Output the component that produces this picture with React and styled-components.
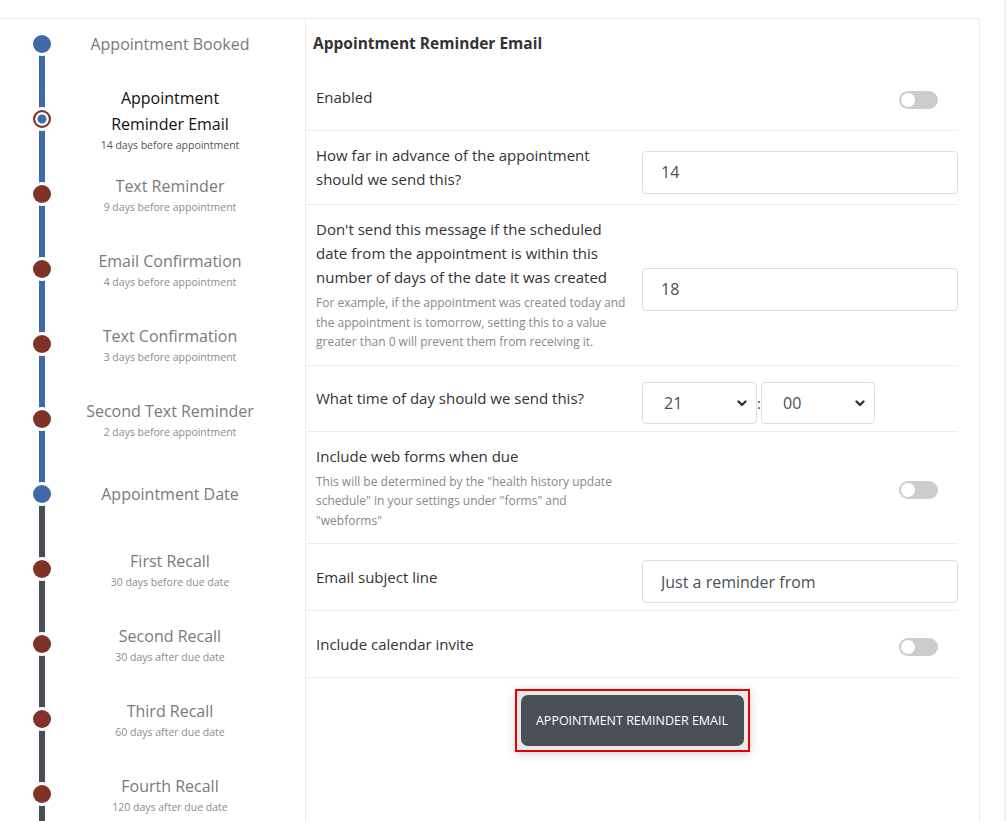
import React from "react";
import styled, { createGlobalStyle } from "styled-components";

const BLUE = "#3e6aa8";
const BROWN = "#7f3328";
const DARK = "#4a4d55";

const GlobalStyle = createGlobalStyle`
  html, body {
    margin: 0;
    padding: 0;
    background: #fff;
    overflow: hidden;
  }
  body {
    font-family: "Open Sans", "Noto Sans", sans-serif;
    color: #333;
  }
  * { box-sizing: border-box; }
`;

const Page = styled.div`
  width: 1006px;
  height: 100vh;
  padding-top: 18px;
  border-right: 2px solid #f1f1f3;
`;

const Layout = styled.div`
  width: 980px;
  height: 100%;
  display: flex;
  border-top: 1px solid #ececec;
  border-right: 1px solid #ececec;
`;

/* ---------- timeline ---------- */

const Timeline = styled.ul`
  list-style: none;
  margin: 0;
  padding: 0;
  width: 305px;
  flex-shrink: 0;
`;

const Step = styled.li`
  position: relative;
  height: 75px;
  padding-bottom: 25px;
  display: flex;
  align-items: center;

  &::before,
  &::after {
    content: "";
    position: absolute;
    left: 39px;
    width: 6px;
  }
  &::before {
    top: 0;
    height: 25px;
    background: ${(p) => p.$above || "transparent"};
  }
  &::after {
    top: 25px;
    bottom: 0;
    background: ${(p) => p.$below || "transparent"};
  }
`;

const MarkerSlot = styled.div`
  width: 84px;
  flex-shrink: 0;
  display: flex;
  justify-content: center;
`;

const Marker = styled.span`
  position: relative;
  z-index: 1;
  width: 18px;
  height: 18px;
  border-radius: 50%;
  background: ${(p) => (p.$kind === "brown" ? BROWN : BLUE)};
  border: ${(p) => (p.$kind === "current" ? `2.5px solid ${BROWN}` : "none")};
  box-shadow: ${(p) =>
    p.$kind === "current"
      ? "inset 0 0 0 2.5px #fff, 0 0 0 3px #fff"
      : "0 0 0 3px #fff"};
`;

const StepText = styled.div`
  width: 172px;
  flex-shrink: 0;
  display: flex;
  flex-direction: column;
  align-items: center;
  text-align: center;
`;

const StepTitle = styled.div`
  width: ${(p) => (p.$active ? "172px" : "200px")};
  font-size: 16px;
  line-height: 26px;
  color: ${(p) => (p.$active ? "#111" : "#7a7a7a")};
`;

const StepSub = styled.div`
  font-size: 10.5px;
  line-height: 16px;
  white-space: nowrap;
  color: ${(p) => (p.$active ? "#555" : "#8c8c8c")};
`;

/* ---------- settings panel ---------- */

const Panel = styled.section`
  flex: 1;
  border-left: 1px solid #ececec;
  padding-right: 21px;
`;

const PanelTitle = styled.h2`
  margin: 0 0 9px;
  padding: 12px 0 0 7px;
  font-size: 15.5px;
  font-weight: 700;
  line-height: 24px;
  color: #333;
`;

const Row = styled.div`
  display: grid;
  grid-template-columns: 1fr 316px;
  column-gap: 10px;
  align-items: center;
  padding: 12px 0 7px 10px;
  border-bottom: 1px solid #ececec;
`;

const LabelCell = styled.div`
  margin-bottom: 6px;
`;

const Label = styled.div`
  font-size: 15px;
  line-height: 24px;
  color: #333;
`;

const Help = styled.div`
  max-width: 312px;
  margin-top: 4px;
  font-size: 12px;
  line-height: 19.5px;
  color: #888;
`;

const Control = styled.div`
  padding-top: 4px;
  display: flex;
  align-items: center;
`;

const SwitchCell = styled.div`
  min-height: 47px;
  display: flex;
  align-items: center;
  justify-content: flex-end;
  padding-right: 20px;
`;

const Switch = styled.span`
  position: relative;
  width: 39px;
  height: 18px;
  border-radius: 9px;
  background: #cccccc;

  &::after {
    content: "";
    position: absolute;
    left: 2px;
    top: 2px;
    width: 14px;
    height: 14px;
    border-radius: 50%;
    background: #fff;
  }
`;

const TextInput = styled.input`
  width: 100%;
  height: 43px;
  padding: 0 18px;
  border: 1px solid #dcdfe3;
  border-radius: 4px;
  font-family: inherit;
  font-size: 16px;
  color: #495057;
  outline: none;
`;

const chevron =
  "url(\"data:image/svg+xml,%3Csvg xmlns='http://www.w3.org/2000/svg' viewBox='0 0 12 12'%3E%3Cpath d='M2.5 4.5l3.5 3.5 3.5-3.5' fill='none' stroke='%23333' stroke-width='2.4' stroke-linecap='round' stroke-linejoin='round'/%3E%3C/svg%3E\")";

const Select = styled.select`
  width: ${(p) => p.$width}px;
  height: 42px;
  padding: 0 0 0 21px;
  border: 1px solid #dcdfe3;
  border-radius: 4px;
  appearance: none;
  background: #fff ${chevron} no-repeat right 8px center / 12px 12px;
  font-family: inherit;
  font-size: 16px;
  color: #495057;
  outline: none;
`;

const Colon = styled.span`
  width: 4px;
  text-align: center;
  font-size: 15px;
  color: #444;
`;

const Actions = styled.div`
  display: flex;
  justify-content: center;
  padding-top: 11px;
`;

const ButtonFrame = styled.div`
  padding: 4px;
  border: 2px solid #e60000;
  background: #e8e8e8;
  box-shadow: 0 2px 10px rgba(0, 0, 0, 0.18);
`;

const PrimaryButton = styled.button`
  width: 223px;
  height: 51px;
  border: none;
  border-radius: 7px;
  background: #4a4e56;
  color: #fff;
  font-family: inherit;
  font-size: 12.5px;
  text-transform: uppercase;
  cursor: pointer;
`;

const steps = [
  { title: "Appointment Booked", marker: "blue", below: BLUE },
  {
    title: "Appointment Reminder Email",
    sub: "14 days before appointment",
    marker: "current",
    active: true,
    above: BLUE,
    below: BLUE,
  },
  { title: "Text Reminder", sub: "9 days before appointment", marker: "brown", above: BLUE, below: BLUE },
  { title: "Email Confirmation", sub: "4 days before appointment", marker: "brown", above: BLUE, below: BLUE },
  { title: "Text Confirmation", sub: "3 days before appointment", marker: "brown", above: BLUE, below: BLUE },
  { title: "Second Text Reminder", sub: "2 days before appointment", marker: "brown", above: BLUE, below: BLUE },
  { title: "Appointment Date", marker: "blue", above: BLUE, below: DARK },
  { title: "First Recall", sub: "30 days before due date", marker: "brown", above: DARK, below: DARK },
  { title: "Second Recall", sub: "30 days after due date", marker: "brown", above: DARK, below: DARK },
  { title: "Third Recall", sub: "60 days after due date", marker: "brown", above: DARK, below: DARK },
  { title: "Fourth Recall", sub: "120 days after due date", marker: "brown", above: DARK, below: DARK },
];

const hours = Array.from({ length: 24 }, (_, i) => String(i).padStart(2, "0"));
const minutes = ["00", "15", "30", "45"];

const App = () => {
  return (
    <Page>
      <GlobalStyle />
      <Layout>
        <Timeline>
          {steps.map((s) => (
            <Step key={s.title} $above={s.above} $below={s.below}>
              <MarkerSlot>
                <Marker $kind={s.marker} />
              </MarkerSlot>
              <StepText>
                <StepTitle $active={s.active}>{s.title}</StepTitle>
                {s.sub && <StepSub $active={s.active}>{s.sub}</StepSub>}
              </StepText>
            </Step>
          ))}
        </Timeline>

        <Panel>
          <PanelTitle>Appointment Reminder Email</PanelTitle>

          <Row>
            <LabelCell>
              <Label>Enabled</Label>
            </LabelCell>
            <SwitchCell>
              <Switch role="switch" aria-checked="false" />
            </SwitchCell>
          </Row>

          <Row>
            <LabelCell>
              <Label>How far in advance of the appointment should we send this?</Label>
            </LabelCell>
            <Control>
              <TextInput defaultValue="14" />
            </Control>
          </Row>

          <Row>
            <LabelCell>
              <Label>
                Don't send this message if the scheduled date from the appointment is within this
                number of days of the date it was created
              </Label>
              <Help>
                For example, if the appointment was created today and the appointment is tomorrow,
                setting this to a value greater than 0 will prevent them from receiving it.
              </Help>
            </LabelCell>
            <Control>
              <TextInput defaultValue="18" />
            </Control>
          </Row>

          <Row>
            <LabelCell>
              <Label>What time of day should we send this?</Label>
            </LabelCell>
            <Control>
              <Select $width={115} defaultValue="21">
                {hours.map((h) => (
                  <option key={h} value={h}>
                    {h}
                  </option>
                ))}
              </Select>
              <Colon>:</Colon>
              <Select $width={114} defaultValue="00">
                {minutes.map((m) => (
                  <option key={m} value={m}>
                    {m}
                  </option>
                ))}
              </Select>
            </Control>
          </Row>

          <Row>
            <LabelCell>
              <Label>Include web forms when due</Label>
              <Help>
                This will be determined by the "health history update schedule" in your settings
                under "forms" and "webforms"
              </Help>
            </LabelCell>
            <SwitchCell>
              <Switch role="switch" aria-checked="false" />
            </SwitchCell>
          </Row>

          <Row>
            <LabelCell>
              <Label>Email subject line</Label>
            </LabelCell>
            <Control>
              <TextInput defaultValue="Just a reminder from" />
            </Control>
          </Row>

          <Row>
            <LabelCell>
              <Label>Include calendar invite</Label>
            </LabelCell>
            <SwitchCell>
              <Switch role="switch" aria-checked="false" />
            </SwitchCell>
          </Row>

          <Actions>
            <ButtonFrame>
              <PrimaryButton type="button">Appointment Reminder Email</PrimaryButton>
            </ButtonFrame>
          </Actions>
        </Panel>
      </Layout>
    </Page>
  );
};

export default App;
